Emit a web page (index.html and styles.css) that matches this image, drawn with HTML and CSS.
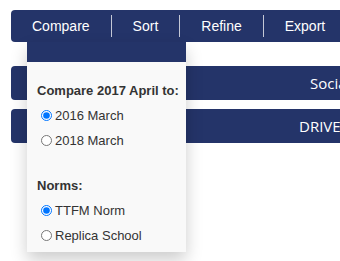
FILE: index.html
```html
<!DOCTYPE html>
<html>
<head>
<meta http-equiv="Content-Type" content="text/html; charset=utf-8"/>
<title>Compare</title>
<link rel="stylesheet" href="styles.css">
</head>
<body>
<div class="frame">
<div class="page">

<div class="nav">
  <div class="nav-item">Compare</div>
  <span class="divider"></span>
  <div class="nav-item">Sort</div>
  <span class="divider"></span>
  <div class="nav-item">Refine</div>
  <span class="divider"></span>
  <div class="nav-item">Export</div>

  <div class="dropdown">
    <div class="dropdown-head"></div>
    <div class="dropdown-body">
      <div class="group-title">Compare 2017 April to:</div>
      <label class="option"><input type="radio" name="period" checked> 2016 March</label>
      <label class="option"><input type="radio" name="period"> 2018 March</label>

      <div class="group-title group-gap">Norms:</div>
      <label class="option"><input type="radio" name="norm" checked> TTFM Norm</label>
      <label class="option"><input type="radio" name="norm"> Replica School</label>
    </div>
  </div>
</div>

<div class="bar bar-social">Social Engagement</div>
<div class="bar bar-drive">DRIVERS</div>

</div>
</div>
</body>
</html>
```

FILE: styles.css
```css
body {
   margin: 0;
   background-color: white;
   font-family: "Liberation Sans", Arial, sans-serif;
}

.frame {
   width: 340px;
   height: 261px;
   overflow: hidden;
}

.page {
   width: 700px;
   padding: 10px 0 0 11px;
}

.nav {
   position: relative;
   display: flex;
   align-items: center;
   height: 32px;
   background-color: #243469;
   border-radius: 4px;
}

.nav-item {
   padding: 0 21px;
   line-height: 32px;
   color: white;
   font-size: 14px;
}

.divider {
   width: 1px;
   height: 22px;
   background-color: #c4c8d6;
}

.dropdown {
   position: absolute;
   left: 16px;
   top: 32px;
   width: 159px;
   background-color: #f9f9f9;
   box-shadow: 0px 8px 16px 0px rgba(0,0,0,0.2);
   z-index: 2;
}

.dropdown-head {
   height: 20px;
   background-color: #243469;
}

.dropdown-body {
   padding: 16px 10px 4px;
   color: #333;
   font-size: 13px;
   white-space: nowrap;
}

.group-title {
   font-weight: bold;
   line-height: 25px;
}

.group-gap {
   margin-top: 20px;
}

.option {
   display: flex;
   align-items: center;
   line-height: 25px;
}

.option input {
   width: 11px;
   height: 11px;
   margin: 0 3px 0 4px;
}

.bar {
   height: 34px;
   line-height: 34px;
   margin-top: 9px;
   background-color: #243469;
   border-radius: 4px 0 0 4px;
   color: white;
   font-family: "Open Sans", sans-serif;
   font-size: 15px;
   white-space: nowrap;
}

.bar-social {
   margin-top: 24px;
   padding-left: 299px;
}

.bar-drive {
   padding-left: 288px;
}
```
